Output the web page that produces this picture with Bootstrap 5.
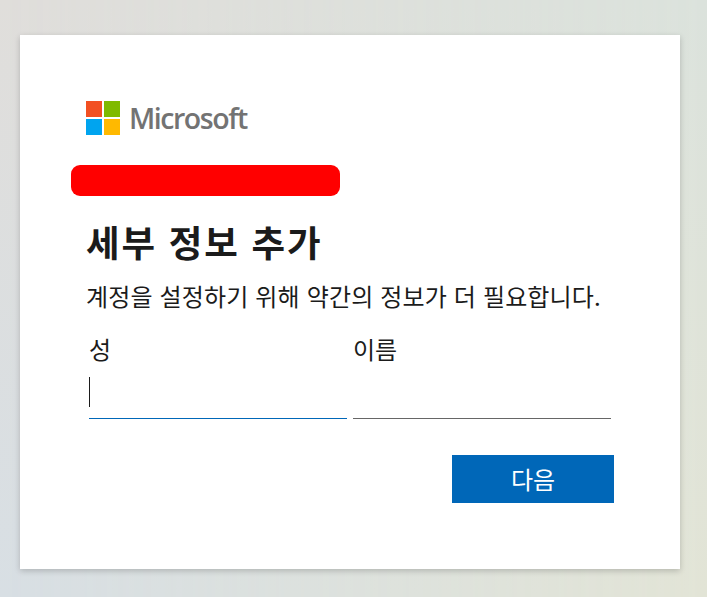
<!DOCTYPE html>
<html lang="ko">
<head>
  <meta charset="UTF-8">
  <meta name="viewport" content="width=device-width, initial-scale=1.0">
  <title>세부 정보 추가</title>
  <link href="https://cdn.jsdelivr.net/npm/bootstrap@5.3.1/dist/css/bootstrap.min.css" rel="stylesheet">
  <style>
    html, body { height: 100%; }
    body {
      font-family: "Noto Sans CJK KR", "Liberation Sans", sans-serif;
      color: #1b1b1b;
      overflow: hidden;
      background: linear-gradient(to bottom, #e0dedb, #d8dfe4);
      position: relative;
    }
    .bg-right {
      position: absolute; inset: 0;
      background: linear-gradient(to bottom, #dbe2dc, #e2e4d6);
      -webkit-mask-image: linear-gradient(to right, transparent, #000);
      mask-image: linear-gradient(to right, transparent, #000);
    }
    .page-wrap { position: relative; padding: 35px 27px 28px 20px; }
    .signup-box {
      width: 660px; height: 534px;
      border: 0; border-radius: 0;
      box-shadow: 0 2px 6px rgba(0,0,0,.2);
      padding: 66px 66px 0 66px;
    }
    .ms-logo { height: 34px; gap: 9px; }
    .ms-grid { display: grid; grid-template-columns: 16px 16px; grid-auto-rows: 16px; gap: 2px; }
    .ms-grid span:nth-child(1) { background: #f25022; }
    .ms-grid span:nth-child(2) { background: #7fba00; }
    .ms-grid span:nth-child(3) { background: #00a4ef; }
    .ms-grid span:nth-child(4) { background: #ffb900; }
    .ms-word {
      font-family: "Open Sans", sans-serif; font-weight: 600; font-size: 28.5px;
      letter-spacing: -1.45px; color: #737373; line-height: 34px;
    }
    .redact-bar {
      width: 269px; height: 31px; margin: 30px 0 0 -15px;
      background: #f00; border-radius: 9px;
    }
    .page-title { font-size: 36.5px; font-weight: 700; line-height: 44px; margin: 24px 0 0 0; letter-spacing: 1.8px; }
    .page-desc { font-size: 24px; line-height: 30px; margin: 17px 0 0 0; white-space: nowrap; letter-spacing: .15px; }
    .name-row { gap: 6px; margin: 23px 0 0 3px; width: 522px; }
    .name-col { width: 258px; position: relative; }
    .name-label { font-size: 24px; line-height: 30px; margin: 0; display: block; }
    .name-input.form-control {
      height: 40px; margin-top: 15px; padding: 0;
      border: 0; border-bottom: 1px solid #666; border-radius: 0; box-shadow: none;
    }
    .name-input.is-active.form-control { border-bottom-color: #0067b8; }
    .fake-caret { position: absolute; left: 0; top: 43px; width: 1px; height: 30px; background: #1b1b1b; }
    .next-row { margin-top: 36px; width: 528px; }
    .next-btn.btn {
      width: 162px; height: 48px; padding: 0; border: 0; border-radius: 0;
      background: #0067b8; color: #fff; font-size: 24px;
    }
  </style>
</head>
<body>
  <div class="bg-right"></div>
  <div class="page-wrap">
    <div class="card signup-box">
      <div class="d-flex align-items-center ms-logo">
        <div class="ms-grid"><span></span><span></span><span></span><span></span></div>
        <span class="ms-word">Microsoft</span>
      </div>
      <div class="redact-bar"></div>
      <h1 class="page-title">세부 정보 추가</h1>
      <p class="page-desc">계정을 설정하기 위해 약간의 정보가 더 필요합니다.</p>
      <div class="d-flex name-row">
        <div class="name-col">
          <label class="name-label form-label" for="last-name">성</label>
          <input id="last-name" type="text" class="form-control name-input is-active">
          <span class="fake-caret"></span>
        </div>
        <div class="name-col">
          <label class="name-label form-label" for="first-name">이름</label>
          <input id="first-name" type="text" class="form-control name-input">
        </div>
      </div>
      <div class="d-flex justify-content-end next-row">
        <button class="btn next-btn" type="button">다음</button>
      </div>
    </div>
  </div>
</body>
</html>
